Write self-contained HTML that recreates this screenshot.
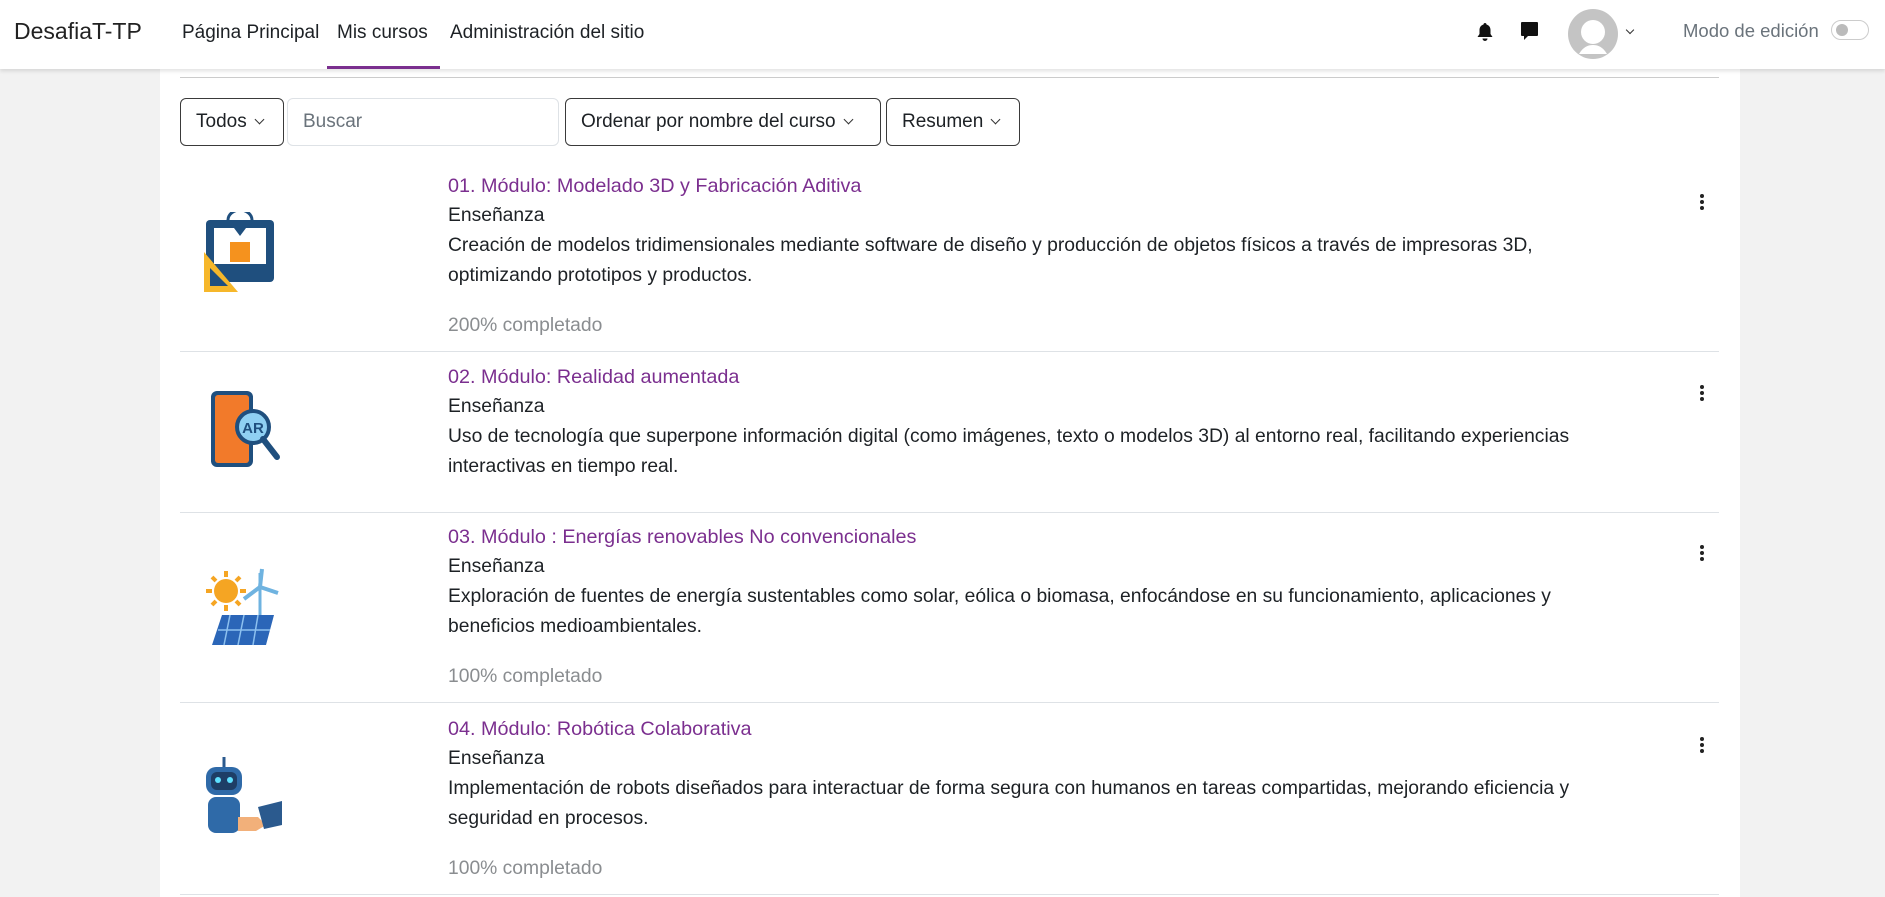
<!DOCTYPE html>
<html><head><meta charset="utf-8"><style>
*{margin:0;padding:0;box-sizing:border-box}
body{width:1885px;height:897px;overflow:hidden;background:#f2f2f2;font-family:"Liberation Sans",sans-serif;color:#1d2125;position:relative}
.nav{position:absolute;left:0;top:0;width:1885px;height:69px;background:#fff;box-shadow:0 2px 4px rgba(0,0,0,.12);z-index:2}
.a{position:absolute;white-space:nowrap}
.card{position:absolute;left:160px;top:69px;width:1580px;height:828px;background:#fff}
.btn{position:absolute;top:98px;height:48px;border:1px solid #3a3a3a;border-radius:6px;font-size:19px;line-height:46px;padding-left:15px;background:#fff}
.chev{display:inline-block;width:7px;height:7px;border-right:1.6px solid #333;border-bottom:1.6px solid #333;transform:rotate(45deg);margin-left:9px;position:relative;top:-4px}
.title{color:#7b2f8f;font-size:19.8px}
.t{font-size:19.3px;color:#1d2125}
.g{font-size:19.3px;color:#8a8d90}
.hr{position:absolute;left:180px;width:1539px;height:1px;background:#dee2e6}
.dots{position:absolute;left:1700px;width:4px}
.dots i{display:block;width:4px;height:4px;border-radius:2px;background:#222;margin-bottom:2px}
</style></head><body>
<div class="nav">
<div class="a" style="left:14px;top:18px;font-size:23px;color:#222">DesafiaT-TP</div>
<div class="a" style="left:182px;top:22px;font-size:19px">Página Principal</div>
<div class="a" style="left:337px;top:22px;font-size:19px">Mis cursos</div>
<div class="a" style="left:327px;top:66px;width:113px;height:3px;background:#7b2f8f"></div>
<div class="a" style="left:450px;top:22px;font-size:19px">Administración del sitio</div>
<svg class="a" style="left:1476px;top:22px" width="18" height="20" viewBox="0 0 18 20"><path d="M9 1c-1 0-1.5.7-1.5 1.5C4.8 3.3 3.5 5.5 3.5 8v4L1.5 15h15l-2-3V8c0-2.5-1.3-4.7-4-5.5C10.5 1.7 10 1 9 1z M6.5 16.5a2.5 2.5 0 0 0 5 0z" fill="#111"/></svg>
<svg class="a" style="left:1520px;top:21px" width="19" height="21" viewBox="0 0 19 21"><path d="M2 1h15a1 1 0 0 1 1 1v12a1 1 0 0 1-1 1H8l-4 4v-4H2a1 1 0 0 1-1-1V2a1 1 0 0 1 1-1z" fill="#111"/></svg>
<svg class="a" style="left:1567px;top:8px" width="52" height="52" viewBox="0 0 52 52"><circle cx="26" cy="26" r="25" fill="#c4c4c4"/><circle cx="26" cy="24" r="12" fill="#fff"/><path d="M12 46c4-7 9-9 14-9s10 2 14 9z" fill="#fff"/></svg>
<div class="a" style="left:1627px;top:24px"><span class="chev" style="margin:0;width:6px;height:6px"></span></div>
<div class="a" style="left:1683px;top:20px;font-size:18.5px;color:#6a737b">Modo de edición</div>
<div class="a" style="left:1831px;top:20px;width:38px;height:20px;border:1px solid #ccc;border-radius:10px"><div style="position:absolute;left:4px;top:3px;width:12px;height:12px;border-radius:6px;background:#bbb"></div></div>
</div>
<div class="card"></div>
<div class="hr" style="top:77px;background:#ccc"></div>
<div class="btn" style="left:180px;width:104px">Todos<span class="chev"></span></div>
<div class="btn" style="left:287px;width:272px;border-color:#dee2e6;color:#6a737b">Buscar</div>
<div class="btn" style="left:565px;width:316px">Ordenar por nombre del curso<span class="chev"></span></div>
<div class="btn" style="left:886px;width:134px">Resumen<span class="chev"></span></div>

<!-- row1 -->
<svg class="a" style="left:200px;top:212px" width="80" height="84" viewBox="0 0 80 84"><rect x="6" y="8" width="68" height="62" rx="4" fill="#1f4f7e"/><rect x="14" y="16" width="52" height="40" fill="#fff"/><path d="M28 8a12 10 0 0 1 24 0" stroke="#1f4f7e" stroke-width="3" fill="none"/><path d="M34 16h12l-6 8z" fill="#1f4f7e"/><rect x="30" y="30" width="20" height="20" fill="#f5921e"/><rect x="14" y="52" width="52" height="6" fill="#1f4f7e"/><path d="M4 40v40h34z" fill="#f6b72a"/><path d="M10 56v18h18z" fill="#1f4f7e"/></svg>
<div class="a title" style="left:448px;top:175px">01. Módulo: Modelado 3D y Fabricación Aditiva</div>
<div class="a t" style="left:448px;top:205px">Enseñanza</div>
<div class="a t" style="left:448px;top:235px">Creación de modelos tridimensionales mediante software de diseño y producción de objetos físicos a través de impresoras 3D,</div>
<div class="a t" style="left:448px;top:265px">optimizando prototipos y productos.</div>
<div class="a g" style="left:448px;top:315px">200% completado</div>
<div class="dots" style="top:194px"><i></i><i></i><i></i></div>
<div class="hr" style="top:351px"></div>

<!-- row2 -->
<svg class="a" style="left:205px;top:387px" width="80" height="84" viewBox="0 0 80 84"><rect x="6" y="4" width="42" height="76" rx="6" fill="#1f4f7e"/><rect x="10" y="8" width="34" height="68" rx="3" fill="#f27a2a"/><circle cx="48" cy="40" r="16" fill="#8fd0f2" stroke="#1f4f7e" stroke-width="4"/><path d="M58 52l14 18" stroke="#1f4f7e" stroke-width="6" stroke-linecap="round"/><text x="48" y="46" font-size="15" font-family="Liberation Sans" font-weight="bold" fill="#1f4f7e" text-anchor="middle">AR</text></svg>
<div class="a title" style="left:448px;top:366px">02. Módulo: Realidad aumentada</div>
<div class="a t" style="left:448px;top:396px">Enseñanza</div>
<div class="a t" style="left:448px;top:426px">Uso de tecnología que superpone información digital (como imágenes, texto o modelos 3D) al entorno real, facilitando experiencias</div>
<div class="a t" style="left:448px;top:456px">interactivas en tiempo real.</div>
<div class="dots" style="top:385px"><i></i><i></i><i></i></div>
<div class="hr" style="top:512px"></div>

<!-- row3 -->
<svg class="a" style="left:200px;top:565px" width="84" height="90" viewBox="0 0 84 90"><circle cx="26" cy="26" r="12" fill="#f5a523"/><g stroke="#f5a523" stroke-width="4"><path d="M26 6v6M26 40v6M6 26h6M40 26h6M12 12l4 4M36 36l4 4M12 40l4-4M36 16l4-4"/></g><path d="M60 8v50" stroke="#6fb3e0" stroke-width="3"/><path d="M60 22l-16 12M60 22l18 6M60 22l2-18" stroke="#6fb3e0" stroke-width="4"/><path d="M22 50h52l-8 30H12z" fill="#2b66b8"/><path d="M30 50l-6 30M44 50l-6 30M58 50l-5 30M18 65h52" stroke="#8cc0ef" stroke-width="1.5"/></svg>
<div class="a title" style="left:448px;top:526px">03. Módulo : Energías renovables No convencionales</div>
<div class="a t" style="left:448px;top:556px">Enseñanza</div>
<div class="a t" style="left:448px;top:586px">Exploración de fuentes de energía sustentables como solar, eólica o biomasa, enfocándose en su funcionamiento, aplicaciones y</div>
<div class="a t" style="left:448px;top:616px">beneficios medioambientales.</div>
<div class="a g" style="left:448px;top:666px">100% completado</div>
<div class="dots" style="top:545px"><i></i><i></i><i></i></div>
<div class="hr" style="top:702px"></div>

<!-- row4 -->
<svg class="a" style="left:198px;top:755px" width="90" height="90" viewBox="0 0 90 90"><path d="M26 2v10" stroke="#2b5a8e" stroke-width="3"/><rect x="8" y="12" width="36" height="28" rx="10" fill="#2f6aa8"/><rect x="13" y="17" width="26" height="18" rx="6" fill="#1e3e66"/><circle cx="20" cy="25" r="3" fill="#5ee0ff"/><circle cx="32" cy="25" r="3" fill="#5ee0ff"/><rect x="10" y="42" width="32" height="36" rx="8" fill="#2f6aa8"/><path d="M40 62l20 0 8 8-10 6H40z" fill="#f2b07a"/><path d="M60 52l24-6v24l-18 4z" fill="#2b5a8e"/></svg>
<div class="a title" style="left:448px;top:718px">04. Módulo: Robótica Colaborativa</div>
<div class="a t" style="left:448px;top:748px">Enseñanza</div>
<div class="a t" style="left:448px;top:778px">Implementación de robots diseñados para interactuar de forma segura con humanos en tareas compartidas, mejorando eficiencia y</div>
<div class="a t" style="left:448px;top:808px">seguridad en procesos.</div>
<div class="a g" style="left:448px;top:858px">100% completado</div>
<div class="dots" style="top:737px"><i></i><i></i><i></i></div>
<div class="hr" style="top:894px"></div>
</body></html>
